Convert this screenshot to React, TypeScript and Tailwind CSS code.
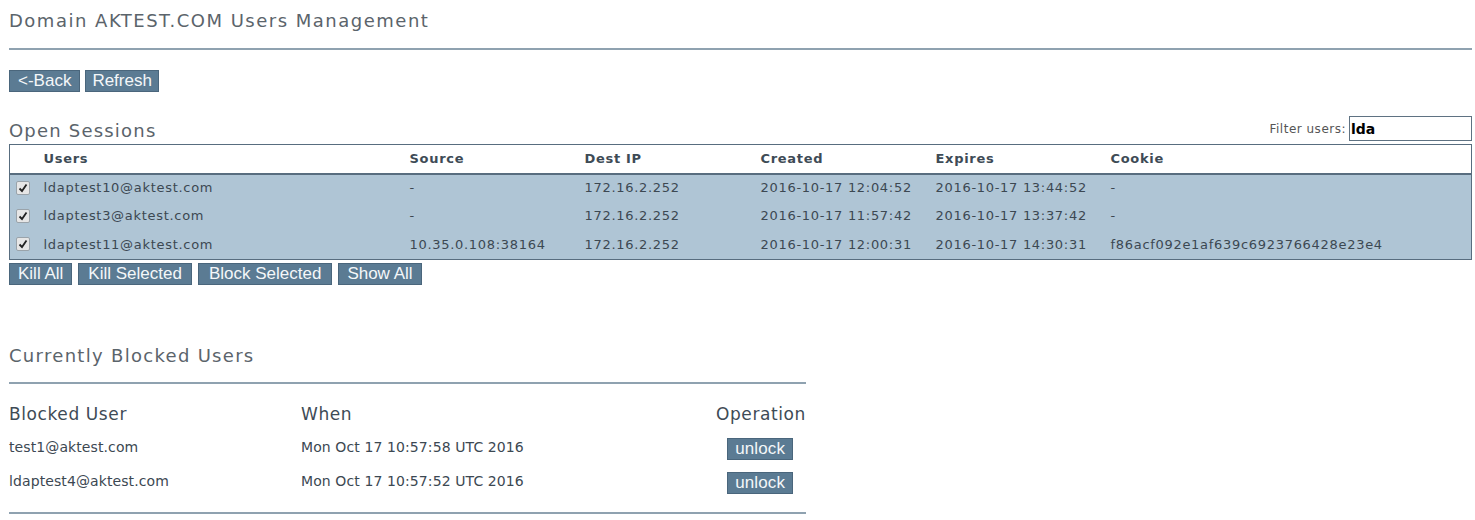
import React from "react";

type Session = { user: string; source: string; dest: string; created: string; expires: string; cookie: string };
type Blocked = { user: string; when: string };

const sessions: Session[] = [
  { user: "ldaptest10@aktest.com", source: "-", dest: "172.16.2.252", created: "2016-10-17 12:04:52", expires: "2016-10-17 13:44:52", cookie: "-" },
  { user: "ldaptest3@aktest.com", source: "-", dest: "172.16.2.252", created: "2016-10-17 11:57:42", expires: "2016-10-17 13:37:42", cookie: "-" },
  { user: "ldaptest11@aktest.com", source: "10.35.0.108:38164", dest: "172.16.2.252", created: "2016-10-17 12:00:31", expires: "2016-10-17 14:30:31", cookie: "f86acf092e1af639c6923766428e23e4" }
];

const blocked: Blocked[] = [
  { user: "test1@aktest.com", when: "Mon Oct 17 10:57:58 UTC 2016" },
  { user: "ldaptest4@aktest.com", when: "Mon Oct 17 10:57:52 UTC 2016" }
];

function Btn({ children, className = "px-[8px]" }: { children: React.ReactNode; className?: string }) {
  return (
    <button className={`h-[22px] border border-[#4a667c] bg-[#5b7b93] font-['Liberation_Sans',Arial,sans-serif] text-[17px] leading-[20px] text-[#f4f7f9] ${className}`}>
      {children}
    </button>
  );
}

function Check() {
  return (
    <span className="flex h-[14px] w-[14px] items-center justify-center rounded-[2px] border border-[#9aa3aa] bg-[#e6e6e6]">
      <svg width="10" height="10" viewBox="0 0 10 10"><path d="M1.5 5.5 L4 8 L8.5 1.5" fill="none" stroke="#222" strokeWidth="1.8" /></svg>
    </span>
  );
}

export default function App() {
  return (
    <div className="w-[1475px] bg-white px-[9px] pt-[8px] font-['DejaVu_Sans',sans-serif] text-[#4e5b66]">
      <h1 className="text-[18px] leading-[26px] tracking-[1.5px] text-[#5b646b]">Domain AKTEST.COM Users Management</h1>
      <div className="mt-[14px] h-[2px] w-[1463px] bg-[#8fa2b0]" />

      <div className="mt-[20px] flex gap-[5px]">
        <Btn>&lt;-Back</Btn>
        <Btn className="px-[6px]">Refresh</Btn>
      </div>

      <div className="mt-[24px] flex w-[1463px] items-end justify-between">
        <h2 className="text-[18px] leading-[24px] tracking-[1.2px] text-[#5b646b]">Open Sessions</h2>
        <div className="flex items-center gap-[3px] pb-[2px]">
          <span className="text-[12px] tracking-[0.5px] text-[#555]">Filter users:</span>
          <input defaultValue="lda" className="h-[25px] w-[123px] border border-[#5f7282] px-[1px] font-['DejaVu_Sans',sans-serif] text-[14px] font-semibold text-black outline-none" />
        </div>
      </div>

      <table className="mt-[1px] w-[1463px] border-collapse border border-[#586d7f] text-[13px] tracking-[0.7px]">
        <thead>
          <tr className="h-[29px] border-b-2 border-[#586d7f] bg-white text-left">
            <th className="w-[34px]" />
            <th className="w-[366px] font-semibold text-[#3e4b56]">Users</th>
            <th className="w-[175px] font-semibold text-[#3e4b56]">Source</th>
            <th className="w-[176px] font-semibold text-[#3e4b56]">Dest IP</th>
            <th className="w-[175px] font-semibold text-[#3e4b56]">Created</th>
            <th className="w-[175px] font-semibold text-[#3e4b56]">Expires</th>
            <th className="font-semibold text-[#3e4b56]">Cookie</th>
          </tr>
        </thead>
        <tbody className="bg-[#afc5d5] text-[#3c4852]">
          {sessions.map((s, i) => (
            <tr key={s.user} className={i === sessions.length - 1 ? "h-[30px] align-top" : "h-[28px]"}>
              <td className={i === sessions.length - 1 ? "pl-[6px] pt-[7px]" : "pl-[6px]"}><Check /></td>
              <td className={i === sessions.length - 1 ? "pt-[5px]" : ""}>{s.user}</td>
              <td className={i === sessions.length - 1 ? "pt-[5px]" : ""}>{s.source}</td>
              <td className={i === sessions.length - 1 ? "pt-[5px]" : ""}>{s.dest}</td>
              <td className={i === sessions.length - 1 ? "pt-[5px]" : ""}>{s.created}</td>
              <td className={i === sessions.length - 1 ? "pt-[5px]" : ""}>{s.expires}</td>
              <td className={i === sessions.length - 1 ? "pt-[5px]" : ""}>{s.cookie}</td>
            </tr>
          ))}
        </tbody>
      </table>

      <div className="mt-[3px] flex gap-[6px]">
        <Btn>Kill All</Btn>
        <Btn className="px-[9px]">Kill Selected</Btn>
        <Btn className="px-[10px]">Block Selected</Btn>
        <Btn className="px-[8px]">Show All</Btn>
      </div>

      <h2 className="mt-[59px] text-[18px] leading-[24px] tracking-[1.3px] text-[#5b646b]">Currently Blocked Users</h2>
      <div className="mt-[14px] h-[2px] w-[797px] bg-[#8fa2b0]" />

      <table className="mt-[16px] w-[797px] text-left">
        <thead>
          <tr className="h-[30px] text-[17px] tracking-[0.6px] text-[#3e4b56]">
            <th className="w-[292px] font-normal">Blocked User</th>
            <th className="font-normal">When</th>
            <th className="text-right font-normal">Operation</th>
          </tr>
        </thead>
        <tbody className="text-[14px] tracking-[0.1px] text-[#3c4852]">
          {blocked.map((b) => (
            <tr key={b.user} className="h-[34px]">
              <td>{b.user}</td>
              <td>{b.when}</td>
              <td className="pr-[13px] pt-[3px] text-right">
                <button className="h-[22px] border border-[#4a667c] bg-[#5b7b93] px-[7px] font-['Liberation_Sans',Arial,sans-serif] text-[17px] leading-[20px] text-[#f4f7f9]">unlock</button>
              </td>
            </tr>
          ))}
        </tbody>
      </table>
      <div className="mt-[14px] h-[2px] w-[797px] bg-[#8fa2b0]" />
    </div>
  );
}
